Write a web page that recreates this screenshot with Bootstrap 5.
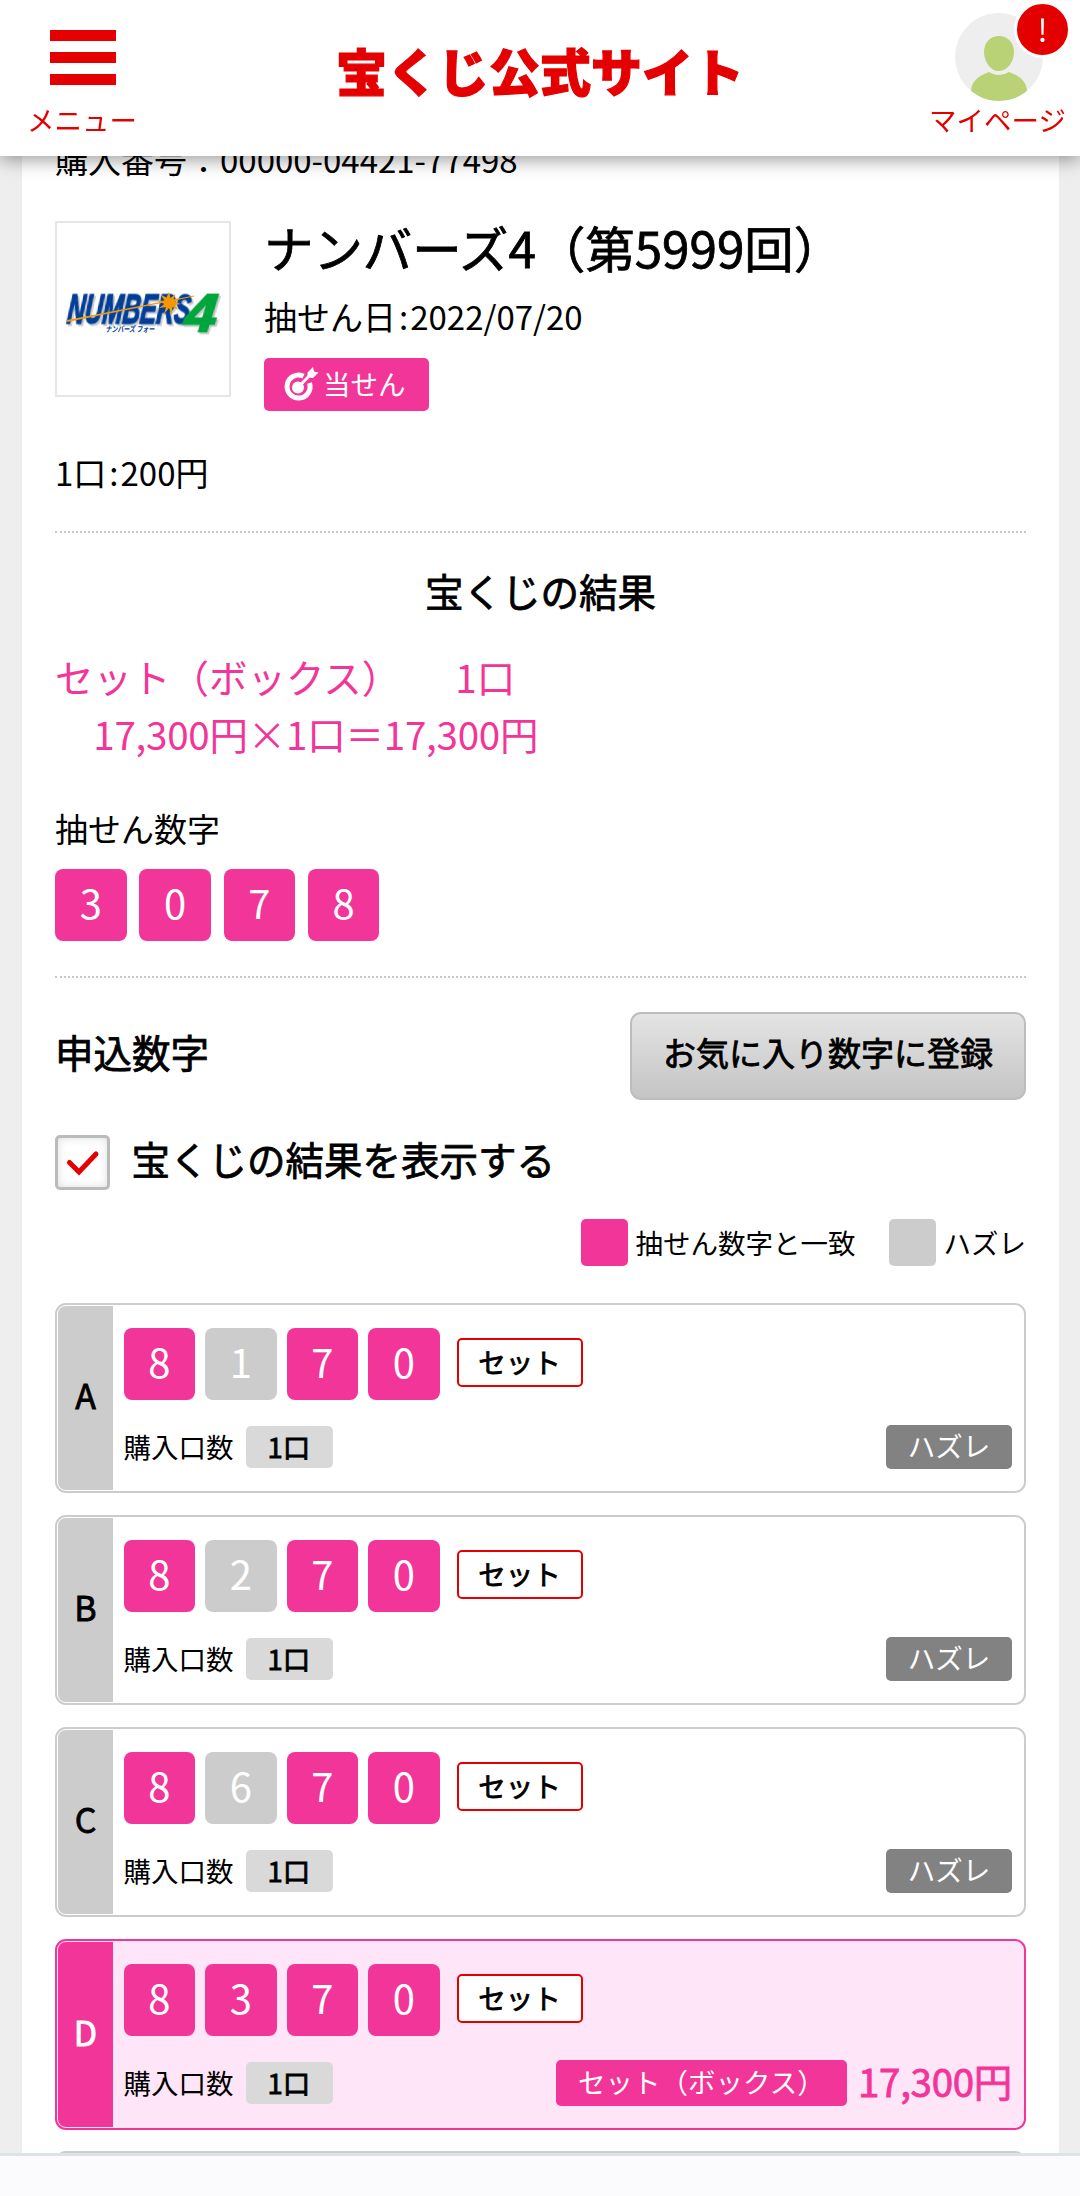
<!DOCTYPE html>
<html lang="ja">
<head>
<meta charset="utf-8">
<meta name="viewport" content="width=device-width, initial-scale=1">
<title>宝くじ公式サイト</title>
<link href="https://cdn.jsdelivr.net/npm/bootstrap@5.3.0/dist/css/bootstrap.min.css" rel="stylesheet">
<style>
:root{--pink:#f23598;--red:#e50000;--line:#ccc}
html,body{height:2196px;overflow:hidden}
body{background:#eee;color:#000;font-family:"Noto Sans CJK JP",sans-serif;font-size:33px;line-height:40px}
.semi{-webkit-text-stroke:.8px currentColor}
.site-header{height:156px;background:#fff;box-shadow:0 3px 18px rgba(0,0,0,.42);color:var(--red)}
.head-link{color:var(--red);font-size:27.5px;line-height:34px;text-decoration:none}
.menu-box{padding:30px 0 0 27px;width:138px}
.menu-bars{gap:11px;width:66px;height:55px;margin-left:23px}
.menu-bars i{display:block;height:11px;background:var(--red)}
.menu-text{margin-top:17px}
.site-logo{font-size:51px;font-weight:900;line-height:60px;padding-top:40px;padding-left:13px;-webkit-text-stroke:1.2px currentColor}
.my-box{width:151px;padding-top:13px;position:relative}
.my-icon{width:88px;height:88px;margin-left:26px}
.my-text{margin-top:1px}
.alert-dot{left:85px;top:1px;width:57px;height:57px;border:3px solid #fff;background:var(--red);font-size:31px;line-height:1;padding-bottom:3px}
.sheet{margin:0 21px 0 22px;padding:139px 33px 0;background:#fff;height:2196px;overflow:hidden}
.info{margin-top:42px;gap:33px}
.prize-logo{width:176px;height:176px;border:2px solid #e6e6e6}
.prize-title{font-size:49.4px;line-height:52px;margin:0;font-weight:400}
.tight-colon{margin:0 2px 0 3px}
.win-tag{width:165px;height:53px;margin-top:22px;background:var(--pink);border-radius:5px;color:#fff;font-size:27.5px;gap:4px;padding-left:19px}
.unit{margin-top:41px}
.dots{height:0;border-top:2px dotted #c8c8c8}
.h-mid{font-size:38.5px;line-height:50px;margin:0;font-weight:400}
.result{font-size:38.5px;line-height:57px;color:var(--pink);margin-top:33px;margin-bottom:46px}
.calc{letter-spacing:-.22px}
.num{width:71.5px;height:71.5px;border-radius:8px;background:var(--pink);color:#fff;font-size:40px;line-height:1;padding-bottom:5px}
.num.miss{background:#ccc}
.fav-btn{width:396px;height:88px;border:2px solid #bdbdbd;border-radius:11px;background:linear-gradient(#e4e4e4,#c4c4c4);color:#000;font-size:33px;line-height:40px;padding:0 0 9px}
.check-row{height:55px;margin-top:35px}
.check-box{width:55px;height:55px;border:3px solid #bbb;border-radius:5px;background:#fff;box-shadow:inset 0 0 8px #ddd}
.legend-row{margin-top:29px;height:47px;font-size:27.5px}
.legend-row span{padding-bottom:2px}
.swatch{width:47px;height:47px;border-radius:5px;margin-right:8px}
.entry{height:190px;margin-bottom:22px;border:2px solid var(--line);border-radius:11px;padding:1px;font-size:27.5px}
.entry-tab{width:55px;background:var(--line);border-radius:8px 0 0 8px;font-size:34px;padding-bottom:6px}
.entry-main{padding:22px 11px 0 10.5px}
.entry-low{margin-top:24px;height:46px}
.set-tag{width:126px;height:49px;border:2px solid var(--red);border-radius:5px;background:#fff;margin-left:7px;margin-bottom:3px;padding-bottom:3px}
.qty-text{padding-bottom:2px}
.qty{width:87px;height:42px;background:#d9d9d9;border-radius:5px;margin-left:12px;padding-bottom:2px}
.lose{width:126px;height:44px;background:#828282;border-radius:5px;color:#fff;padding-bottom:4px}
.entry.hit{border-color:var(--pink);background:#fee5f8;height:191px;margin-bottom:21px}
.hit .entry-tab{background:var(--pink);color:#fff}
.prize-tag{width:291px;height:46px;background:var(--pink);border-radius:5px;color:#fff;padding:0 0 4px 22px}
.prize{color:var(--pink);font-size:38.5px;letter-spacing:-.3px;margin-left:11px;padding-bottom:6px}
.nav-strip{height:43px;background:#fbfbfe;border-top:3px solid #dbe2e8}
</style>
</head>
<body>
<header class="site-header fixed-top d-flex justify-content-between align-items-start">
  <a class="menu-box head-link" href="#">
    <span class="menu-bars d-flex flex-column"><i></i><i></i><i></i></span>
    <span class="menu-text d-block">メニュー</span>
  </a>
  <div class="site-logo">宝くじ公式サイト</div>
  <a class="my-box head-link" href="#">
    <svg class="my-icon d-block" viewBox="0 0 88 88"><defs><clipPath id="disc"><circle cx="44" cy="44" r="44"/></clipPath></defs><circle cx="44" cy="44" r="44" fill="#eee"/><g fill="#bad276" clip-path="url(#disc)"><path d="M44 23c9 0 15 7 15 16s-6 19-15 19-15-10-15-19 6-16 15-16z"/><path d="M34 59q10 6 20 0 18 6 18 20v10H16V79q0-14 18-20z"/></g></svg>
    <span class="alert-dot position-absolute rounded-circle text-white d-flex align-items-center justify-content-center">!</span>
    <span class="my-text d-block">マイページ</span>
  </a>
</header>

<main class="sheet">
  <div>購入番号：00000-04421-77498</div>
  <section class="info d-flex">
    <div class="prize-logo flex-shrink-0">
      <svg class="d-block" width="172" height="172" viewBox="2 2 172 172">
        <g font-family="Liberation Sans" font-weight="700" font-style="italic">
          <text x="12" y="102" font-size="42" textLength="123" lengthAdjust="spacingAndGlyphs" fill="#003e98" stroke="#003e98" stroke-width="1.600" style="filter:drop-shadow(2px 2px 0 #ccc)" transform="translate(10 0) skewX(-6)">NUMBERS</text>
          <text x="130" y="110" font-size="54" textLength="32" lengthAdjust="spacingAndGlyphs" fill="#00a63c" stroke="#00a63c" stroke-width="2" style="filter:drop-shadow(2px 2px 0 #ccc)" transform="translate(10 0) skewX(-6)">4</text>
        </g>
        <text x="51" y="111" font-family="Noto Sans CJK JP" font-weight="700" font-size="8" textLength="49" lengthAdjust="spacingAndGlyphs" fill="#003e98" transform="translate(19 0) skewX(-10)">ナンバーズ フォー</text>
        <path d="M12 99L139 74.500 139 75.500 12 101z" fill="#f39800"/>
        <path d="M114 71l1.500 6 5-4-2 5.500 7-1-5.500 3.500 6 2-6.500 1 4 5-6-3-1 8-2.500-7-5 6 2-7-7 1 5.500-4-7-3 7-.5-4-6 6 3z" fill="#f39800"/>
      </svg>
    </div>
    <div>
      <h1 class="prize-title semi">ナンバーズ4（第5999回）</h1>
      <div style="margin-top:23px">抽せん日<span class="tight-colon">:</span>2022/07/20</div>
      <div class="win-tag d-flex align-items-center">
        <svg width="36" height="36" viewBox="0 0 36 36" fill="none" stroke="#fff"><path d="M20.500 9.200A11.500 11.500 0 1 0 26.500 16" stroke-width="5"/><circle cx="15" cy="20.500" r="6" fill="#fff" stroke="none"/><path d="M15 20.500L28 7" stroke-width="3"/><path d="M24.500 10.500V5.500L30 0l1 4.500 4.500 1L30 11z" fill="#fff" stroke="none"/></svg>
        <span class="pb-1">当せん</span>
      </div>
    </div>
  </section>
  <div class="unit">1口<span class="tight-colon">:</span>200円</div>
  <div class="dots" style="margin-top:39px"></div>

  <h2 class="h-mid semi text-center" style="margin-top:32px">宝くじの結果</h2>
  <div class="result">
    <div>セット（ボックス）<span style="margin-left:55px">1口</span></div>
    <div class="calc">　17,300円×1口＝17,300円</div>
  </div>
  <div>抽せん数字</div>
  <div class="d-flex" style="margin-top:21px;gap:12.800px">
    <span class="num d-flex align-items-center justify-content-center">3</span><span class="num d-flex align-items-center justify-content-center">0</span><span class="num d-flex align-items-center justify-content-center">7</span><span class="num d-flex align-items-center justify-content-center">8</span>
  </div>
  <div class="dots" style="margin-top:35.500px"></div>

  <div class="d-flex justify-content-between align-items-center" style="margin-top:34px">
    <h2 class="h-mid semi" style="padding-bottom:10px">申込数字</h2>
    <button class="fav-btn semi" type="button">お気に入り数字に登録</button>
  </div>
  <div class="check-row d-flex align-items-center">
    <span class="check-box d-flex align-items-center justify-content-center"><svg width="36" height="30" viewBox="0 0 36 30" fill="none" stroke="#e50000" stroke-width="5" stroke-linecap="round"><path d="M4.500 14.500L14 24 31 6"/></svg></span>
    <span class="h-mid semi" style="margin-left:21.500px;padding-bottom:10px">宝くじの結果を表示する</span>
  </div>
  <div class="legend-row d-flex justify-content-end align-items-center">
    <span class="swatch" style="background:#f23598"></span><span>抽せん数字と一致</span>
    <span class="swatch" style="background:#ccc;margin-left:33px"></span><span>ハズレ</span>
  </div>

  <div style="margin-top:37px">
    <article class="entry d-flex">
      <div class="entry-tab semi d-flex align-items-center justify-content-center">A</div>
      <div class="entry-main flex-grow-1">
        <div class="d-flex align-items-center" style="gap:10px"><span class="num d-flex align-items-center justify-content-center">8</span><span class="num miss d-flex align-items-center justify-content-center">1</span><span class="num d-flex align-items-center justify-content-center">7</span><span class="num d-flex align-items-center justify-content-center">0</span><span class="set-tag semi d-flex align-items-center justify-content-center">セット</span></div>
        <div class="entry-low d-flex align-items-center"><span class="qty-text">購入口数</span><span class="qty semi d-flex align-items-center justify-content-center">1口</span><span class="lose ms-auto d-flex align-items-center justify-content-center">ハズレ</span></div>
      </div>
    </article>
    <article class="entry d-flex">
      <div class="entry-tab semi d-flex align-items-center justify-content-center">B</div>
      <div class="entry-main flex-grow-1">
        <div class="d-flex align-items-center" style="gap:10px"><span class="num d-flex align-items-center justify-content-center">8</span><span class="num miss d-flex align-items-center justify-content-center">2</span><span class="num d-flex align-items-center justify-content-center">7</span><span class="num d-flex align-items-center justify-content-center">0</span><span class="set-tag semi d-flex align-items-center justify-content-center">セット</span></div>
        <div class="entry-low d-flex align-items-center"><span class="qty-text">購入口数</span><span class="qty semi d-flex align-items-center justify-content-center">1口</span><span class="lose ms-auto d-flex align-items-center justify-content-center">ハズレ</span></div>
      </div>
    </article>
    <article class="entry d-flex">
      <div class="entry-tab semi d-flex align-items-center justify-content-center">C</div>
      <div class="entry-main flex-grow-1">
        <div class="d-flex align-items-center" style="gap:10px"><span class="num d-flex align-items-center justify-content-center">8</span><span class="num miss d-flex align-items-center justify-content-center">6</span><span class="num d-flex align-items-center justify-content-center">7</span><span class="num d-flex align-items-center justify-content-center">0</span><span class="set-tag semi d-flex align-items-center justify-content-center">セット</span></div>
        <div class="entry-low d-flex align-items-center"><span class="qty-text">購入口数</span><span class="qty semi d-flex align-items-center justify-content-center">1口</span><span class="lose ms-auto d-flex align-items-center justify-content-center">ハズレ</span></div>
      </div>
    </article>
    <article class="entry hit d-flex">
      <div class="entry-tab semi d-flex align-items-center justify-content-center">D</div>
      <div class="entry-main flex-grow-1">
        <div class="d-flex align-items-center" style="gap:10px"><span class="num d-flex align-items-center justify-content-center">8</span><span class="num d-flex align-items-center justify-content-center">3</span><span class="num d-flex align-items-center justify-content-center">7</span><span class="num d-flex align-items-center justify-content-center">0</span><span class="set-tag semi d-flex align-items-center justify-content-center">セット</span></div>
        <div class="entry-low d-flex align-items-center"><span class="qty-text">購入口数</span><span class="qty semi d-flex align-items-center justify-content-center">1口</span><span class="prize-tag ms-auto d-flex align-items-center">セット（ボックス）</span><span class="prize semi">17,300円</span></div>
      </div>
    </article>
    <article class="entry"></article>
  </div>
</main>
<div class="nav-strip fixed-bottom"></div>
<script src="https://cdn.jsdelivr.net/npm/bootstrap@5.3.0/dist/js/bootstrap.bundle.min.js"></script>
</body>
</html>
